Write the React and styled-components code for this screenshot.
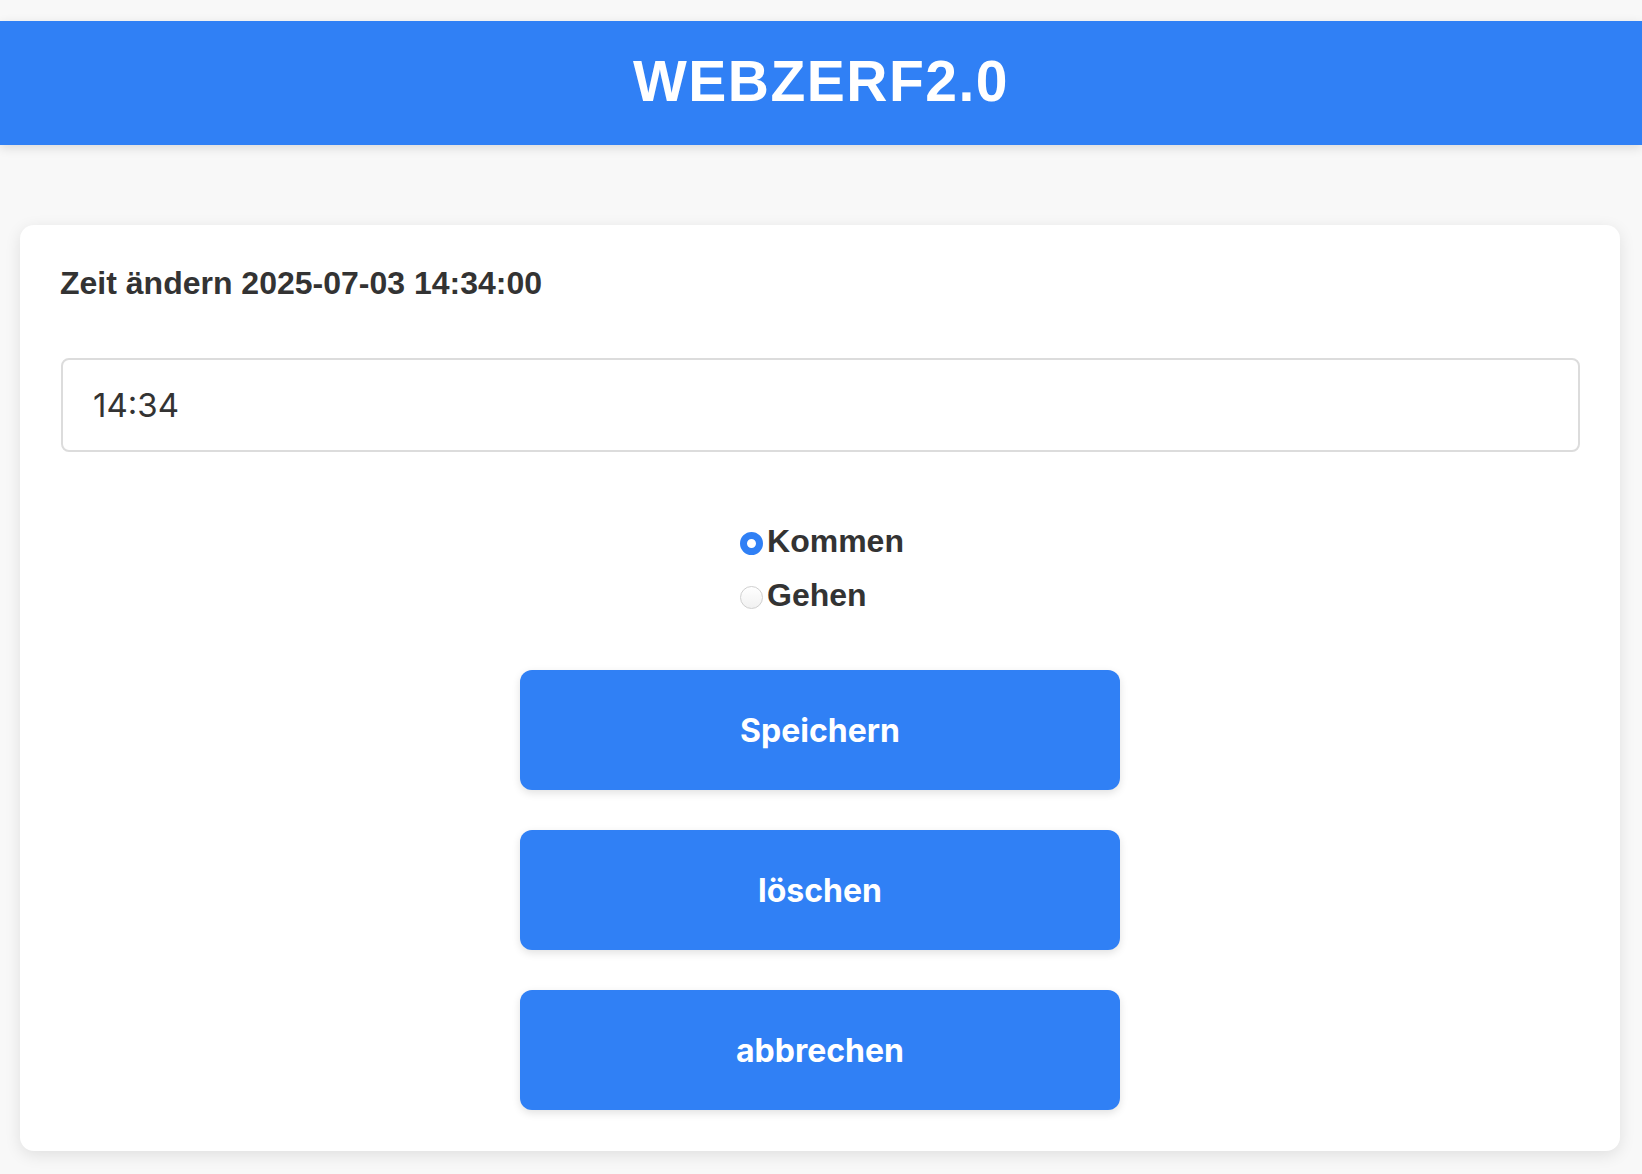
import React, { useState } from 'react';
import styled, { createGlobalStyle } from 'styled-components';

const GlobalStyle = createGlobalStyle`
    html, body {
        margin: 0;
        padding: 0;
        background: #f8f8f8;
    }
    * {
        box-sizing: border-box;
    }
`

const Page = styled.div`
    min-height: 1174px;
    padding-top: 21px;
    font-family: "Liberation Sans", Arial, sans-serif;
    color: #333;
`

const TopBar = styled.header`
    height: 124px;
    background: #3080f5;
    display: flex;
    justify-content: center;
    align-items: center;
    padding-bottom: 4px;
    box-shadow: 0 3px 10px rgba(0, 0, 0, 0.12);

    h1 {
        margin: 0;
        color: #fff;
        font-size: 57px;
        font-weight: 700;
        letter-spacing: 1.5px;
    }
`

const Card = styled.main`
    margin: 80px 22px 0 20px;
    background: #fff;
    border-radius: 14px;
    padding: 40px 40px 41px 40px;
    box-shadow: 0 4px 16px rgba(0, 0, 0, 0.1);
    display: flex;
    flex-direction: column;
`

const Title = styled.h2`
    margin: 0;
    font-size: 32px;
    font-weight: 700;
    line-height: 37px;
`

const TimeInput = styled.input`
    margin-top: 56px;
    margin-left: 1px;
    width: calc(100% - 1px);
    height: 94px;
    border: 2px solid #dcdcdc;
    border-radius: 8px;
    padding: 0 30px;
    font-family: Inter, "Liberation Sans", sans-serif;
    font-size: 33px;
    color: #333;
    outline: none;
`

const RadioGroup = styled.div`
    margin: 62px auto 0;
    padding-left: 4px;
    display: flex;
    flex-direction: column;
`

const RadioRow = styled.label`
    height: 54px;
    display: flex;
    align-items: center;
    font-family: "Liberation Sans", Arial, sans-serif;
    font-weight: 700;
    font-size: 32px;
    color: #333;
    cursor: pointer;
`

const RadioDot = styled.input.attrs({ type: 'radio' })`
    appearance: none;
    width: 23px;
    height: 23px;
    margin: 4px 4px 0 0;
    border-radius: 50%;
    border: 1px solid #cfcfcf;
    background: linear-gradient(#fff, #f1f1f1);

    &:checked {
        border: 7px solid #3080f5;
        background: #fff;
    }
`

const Buttons = styled.div`
    margin-top: 48px;
    display: flex;
    flex-direction: column;
    align-items: center;
    gap: 40px;
`

const ActionButton = styled.button`
    width: 600px;
    height: 120px;
    border: none;
    border-radius: 12px;
    background: #3080f5;
    color: #fff;
    font-family: Inter, "Liberation Sans", sans-serif;
    font-size: 32px;
    font-weight: 700;
    box-shadow: 0 3px 8px rgba(0, 0, 0, 0.12);
    cursor: pointer;
`

const App = () => {
    const [time, setTime] = useState('14:34');
    const [direction, setDirection] = useState('kommen');

    return (
        <>
            <GlobalStyle />
            <Page>
                <TopBar>
                    <h1>WEBZERF2.0</h1>
                </TopBar>
                <Card>
                    <Title>Zeit ändern 2025-07-03 14:34:00</Title>
                    <TimeInput value={time} onChange={(e) => setTime(e.target.value)} />
                    <RadioGroup>
                        <RadioRow>
                            <RadioDot
                                name="richtung"
                                checked={direction === 'kommen'}
                                onChange={() => setDirection('kommen')} />
                            Kommen
                        </RadioRow>
                        <RadioRow>
                            <RadioDot
                                name="richtung"
                                checked={direction === 'gehen'}
                                onChange={() => setDirection('gehen')} />
                            Gehen
                        </RadioRow>
                    </RadioGroup>
                    <Buttons>
                        <ActionButton type="button">Speichern</ActionButton>
                        <ActionButton type="button">löschen</ActionButton>
                        <ActionButton type="button">abbrechen</ActionButton>
                    </Buttons>
                </Card>
            </Page>
        </>
    );
};

export default App;
